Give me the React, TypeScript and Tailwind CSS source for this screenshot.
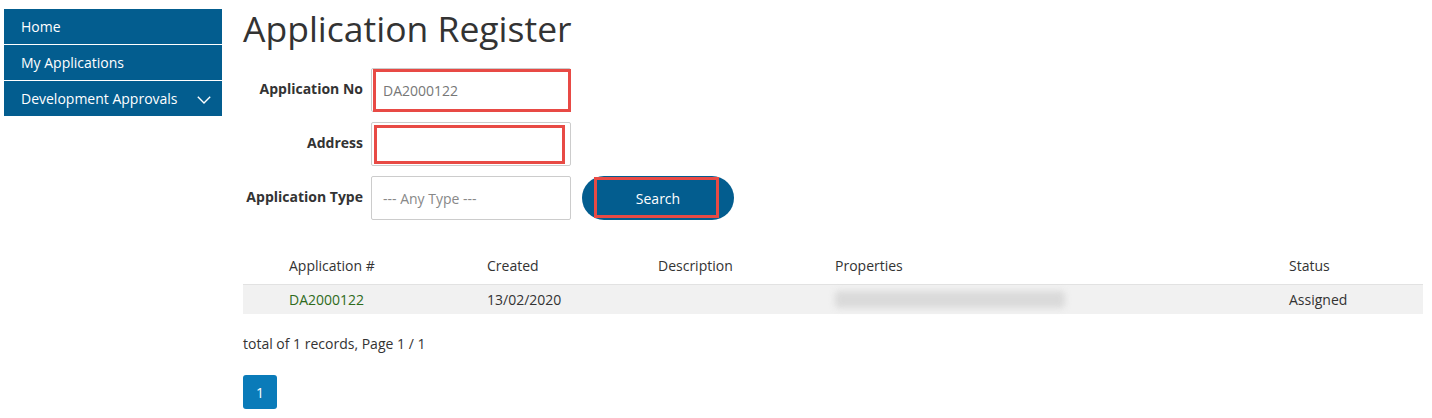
const navItems = ["Home", "My Applications", "Development Approvals"];

function Field({ label, children }: { label: string; children: React.ReactNode }) {
  return (
    <div className="flex items-start">
      <label className="w-[120px] shrink-0 pt-[11px] text-right font-bold leading-5">{label}</label>
      <div className="ml-[8px]">{children}</div>
    </div>
  );
}

export default function App() {
  return (
    <div className="flex min-h-[418px] bg-white font-['Open_Sans',sans-serif] text-[14px] text-[#333]">
      {/* sidebar */}
      <nav className="ml-[4px] mt-[9px] flex w-[218px] shrink-0 flex-col gap-px self-start">
        {navItems.map((item, i) => (
          <div
            key={item}
            className="flex h-[35px] items-center justify-between bg-[#035d8f] pl-[17px] pr-[11px] text-white"
          >
            <span>{item}</span>
            {i === 2 && (
              <svg width="14" height="8" viewBox="0 0 14 8" fill="none" className="mt-[2px]">
                <polyline points="0.8,0.8 7,7 13.2,0.8" stroke="white" strokeWidth="1.4" />
              </svg>
            )}
          </div>
        ))}
      </nav>

      <main className="ml-[21px] mr-[9px] flex-1">
        <h1 className="mt-[8px] text-[35.5px] leading-[40px] text-[#333]">Application Register</h1>

        <div className="mt-[20px] flex flex-col gap-[10px]">
          <Field label="Application No">
            <div className="relative">
              <input
                defaultValue="DA2000122"
                className="h-[44px] w-[200px] rounded-[2px] border border-[#ccc] px-[11px] text-[#777] outline-none"
              />
              <div className="pointer-events-none absolute left-[2px] top-[1px] h-[43px] w-[198px] border-[3px] border-[#e84a45]" />
            </div>
          </Field>
          <Field label="Address">
            <div className="relative">
              <input className="h-[44px] w-[200px] rounded-[2px] border border-[#ccc] px-[11px] outline-none" />
              <div className="pointer-events-none absolute left-[3px] top-[3px] h-[39px] w-[191px] border-[3px] border-[#e84a45]" />
            </div>
          </Field>
          <div className="flex items-start">
            <Field label="Application Type">
              <div className="flex h-[44px] w-[200px] items-center rounded-[2px] border border-[#ccc] px-[11px] text-[#888]">
                --- Any Type ---
              </div>
            </Field>
            <button className="relative ml-[11px] flex h-[44px] w-[152px] items-center justify-center rounded-full bg-[#035d8f] text-white">
              Search
              <span className="pointer-events-none absolute left-[12px] top-[1px] h-[41px] w-[125px] border-[3px] border-[#e84a45]" />
            </button>
          </div>
        </div>

        {/* results table */}
        <div className="mt-[26px]">
          <div className="flex h-[39px] items-center border-b border-[#e2e2e2]">
            <div className="w-[46px]" />
            <div className="w-[198px]">Application #</div>
            <div className="w-[171px]">Created</div>
            <div className="w-[177px]">Description</div>
            <div className="w-[454px]">Properties</div>
            <div className="flex-1">Status</div>
          </div>
          <div className="flex h-[29px] items-center bg-[#f1f1f1]">
            <div className="w-[46px]" />
            <div className="w-[198px] text-[#2f6b1c]">DA2000122</div>
            <div className="w-[171px]">13/02/2020</div>
            <div className="w-[177px]" />
            <div className="w-[454px]">
              <div className="h-[17px] w-[230px] rounded-sm bg-[#dadada] blur-[3px]" />
            </div>
            <div className="flex-1">Assigned</div>
          </div>
        </div>

        <p className="mt-[20px] leading-5">total of 1 records, Page 1 / 1</p>

        <button className="mt-[21px] flex h-[34px] w-[34px] items-center justify-center rounded-[3px] bg-[#0a7bb9] text-white">
          1
        </button>
      </main>
    </div>
  );
}
